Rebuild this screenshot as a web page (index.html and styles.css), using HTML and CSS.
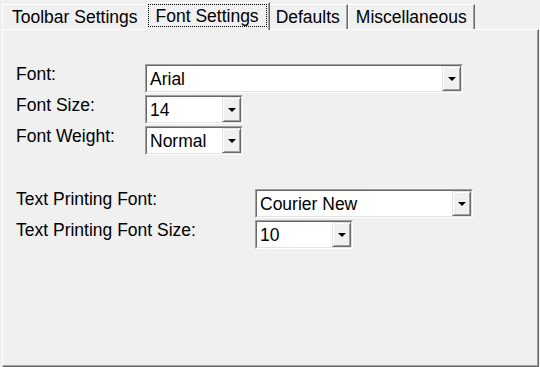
FILE: index.html
```html
<!DOCTYPE html>
<html lang="en">
<head>
  <meta charset="UTF-8">
  <meta name="viewport" content="width=device-width, initial-scale=1.0">
  <title>Font Settings</title>
  <link rel="stylesheet" href="styles.css">
</head>
<body>

  <div class="dialog">
    <div class="tabs">
      <div class="tab">Toolbar Settings</div>
      <div class="tab active"><span class="focus">Font Settings</span></div>
      <div class="tab">Defaults</div>
      <div class="tab">Miscellaneous</div>
    </div>

    <div class="panel">
      <div class="group group-font">
        <span class="label">Font:</span>
        <div class="combo combo-wide">
          <div class="field"><span class="value">Arial</span><span class="arrow"></span></div>
        </div>

        <span class="label">Font Size:</span>
        <div class="combo combo-small">
          <div class="field"><span class="value">14</span><span class="arrow"></span></div>
        </div>

        <span class="label">Font Weight:</span>
        <div class="combo combo-small">
          <div class="field"><span class="value">Normal</span><span class="arrow"></span></div>
        </div>
      </div>

      <div class="group group-print">
        <span class="label">Text Printing Font:</span>
        <div class="combo combo-mid">
          <div class="field"><span class="value">Courier New</span><span class="arrow"></span></div>
        </div>

        <span class="label">Text Printing Font Size:</span>
        <div class="combo combo-small">
          <div class="field"><span class="value">10</span><span class="arrow"></span></div>
        </div>
      </div>
    </div>
  </div>

</body>
</html>
```

FILE: styles.css
```css
body {
  margin: 0;
  background-color: #f0f0f0;
  font-family: 'Liberation Sans', Arial, sans-serif;
  font-size: 17.5px;
  color: #000;
}

.dialog {
  padding: 0 1px 0 2px;
}

/* tab strip */
.tabs {
  display: flex;
  align-items: flex-end;
  height: 29px;
}

.tab {
  box-sizing: border-box;
  height: 25px;
  padding: 2px 7px 0;
  line-height: 20px;
  white-space: nowrap;
  background-color: #f0f0f0;
  border-top: 1px solid #fff;
  border-left: 1px solid #fff;
  border-right: 1px solid #696969;
  box-shadow: inset -1px 0 #a0a0a0;
}

.tab:first-child {
  padding: 2px 9px 0;
}

.tab.active {
  position: relative;
  z-index: 1;
  height: 28px;
  margin: 0 -2px -1px;
  padding: 1px 2px 0 1px;
}

.focus {
  display: block;
  height: 23px;
  box-sizing: border-box;
  padding: 1px 7px 0;
  border: 1px dotted #000;
}

/* page body */
.panel {
  box-sizing: border-box;
  height: 338px;
  padding: 34px 13px 0;
  border: 1px solid;
  border-color: #fff #696969 #696969 #fff;
  box-shadow: inset -1px -1px #a0a0a0;
}

.group {
  display: grid;
  row-gap: 2px;
  align-items: start;
}

.group-font {
  grid-template-columns: 129px auto;
}

.group-print {
  grid-template-columns: 239px auto;
  margin-top: 34px;
}

.label {
  line-height: 20px;
  white-space: nowrap;
}

/* combo boxes */
.combo {
  box-sizing: border-box;
  height: 29px;
  border: 1px solid;
  border-color: #a0a0a0 #fff #fff #a0a0a0;
  justify-self: start;
}

.combo-wide { width: 318px; }
.combo-mid { width: 218px; }
.combo-small { width: 98px; }

.field {
  display: flex;
  height: 100%;
  box-sizing: border-box;
  border: 1px solid;
  border-color: #696969 #e3e3e3 #e3e3e3 #696969;
  background-color: #fff;
}

.value {
  flex: 1;
  padding: 1px 0 0 3px;
  line-height: 24px;
  overflow: hidden;
}

.arrow {
  display: flex;
  align-items: center;
  justify-content: center;
  width: 19px;
  box-sizing: border-box;
  background-color: #f0f0f0;
  border: 1px solid;
  border-color: #e3e3e3 #696969 #696969 #e3e3e3;
  box-shadow: inset 1px 1px #fff, inset -1px -1px #a0a0a0;
}

.arrow::after {
  content: '';
  border-left: 4px solid transparent;
  border-right: 4px solid transparent;
  border-top: 4px solid #000;
}
```
